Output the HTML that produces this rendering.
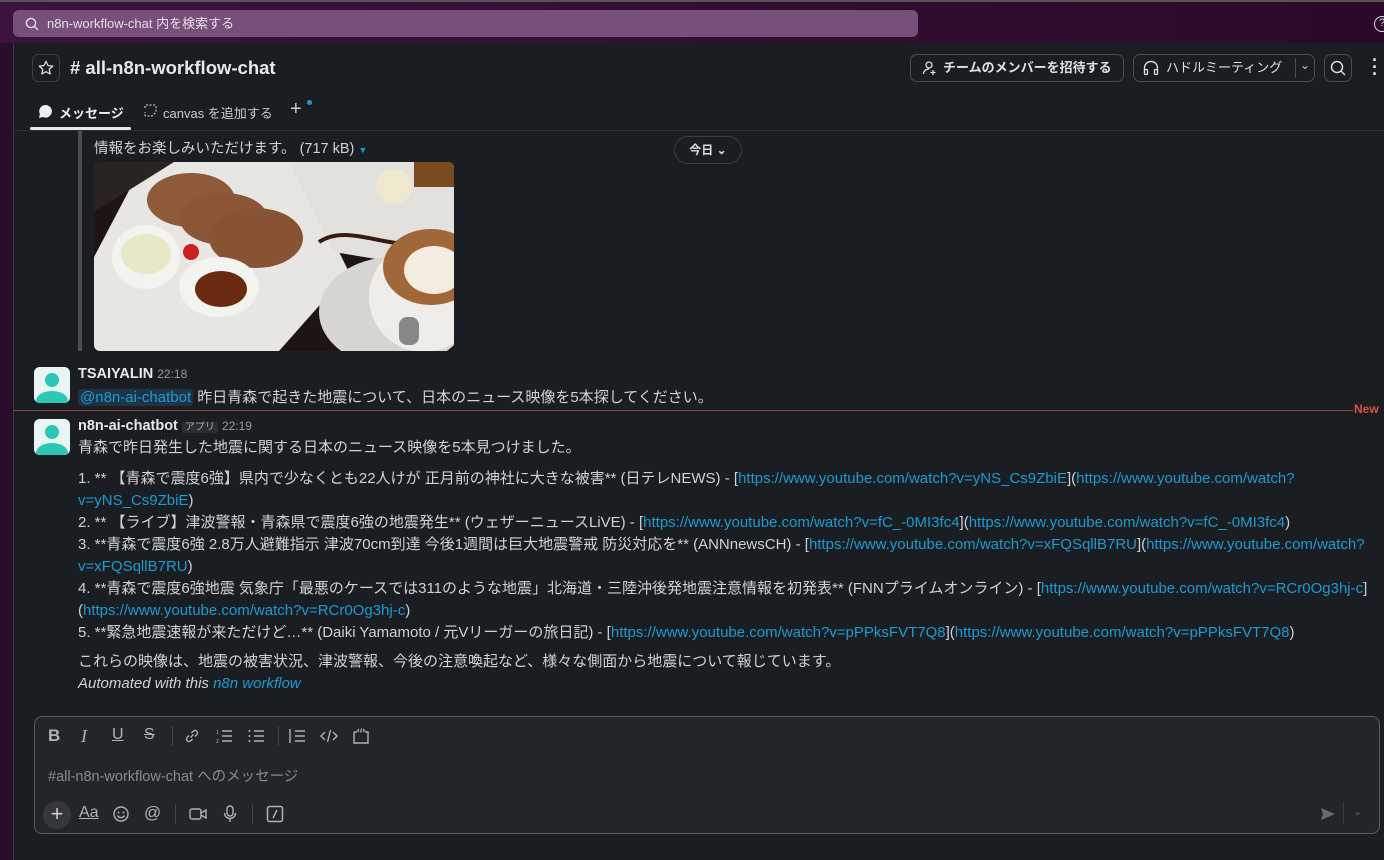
<!DOCTYPE html>
<html><head><meta charset="utf-8"><style>
*{box-sizing:border-box;margin:0;padding:0}
body{width:1384px;height:860px;overflow:hidden;background:#1a1d21;font-family:"Liberation Sans","Noto Sans CJK JP",sans-serif;color:#d1d2d3;position:relative}
.top{position:absolute;left:0;top:0;width:1384px;height:43px;background:linear-gradient(90deg,#3d133d,#2a0a28);border-top:2px solid #555}
.search{position:absolute;left:13px;top:8px;width:905px;height:27px;background:#765078;border-radius:6px;color:#e8dde8;font-size:13px;line-height:27px;padding-left:34px}
.left{position:absolute;left:0;top:43px;width:13px;height:817px;background:#2a0d2a}
.main{position:absolute;left:13px;top:43px;width:1371px;height:817px;background:#1a1d21;border-left:1px solid #3a3a3e}
.a{position:absolute;white-space:nowrap}
.btn{position:absolute;border:1px solid #4a4c50;border-radius:7px;height:28px;font-size:13px;font-weight:bold;color:#e0e0e0;line-height:26px}
.lnk{color:#1d9bd1}
.li{position:absolute;left:78px;font-size:15px;line-height:22px;white-space:nowrap}
.av{position:absolute;width:36px;height:36px;border-radius:6px;background:#dfe;overflow:hidden}
.ic{position:absolute;color:#b0b1b3;font-size:16px}
</style></head><body>
<div class="top"><div class="search">n8n-workflow-chat 内を検索する</div>
<svg style="position:absolute;left:25px;top:15px" width="14" height="14" viewBox="0 0 14 14"><circle cx="6" cy="6" r="4.6" fill="none" stroke="#e8dde8" stroke-width="1.4"/><path d="M9.5 9.5L13 13" stroke="#e8dde8" stroke-width="1.4"/></svg>
<div class="a" style="left:1374px;top:14px;width:16px;height:16px;border:1.5px solid #ddd;border-radius:50%;font-size:11px;color:#ddd;text-align:center;line-height:13px">?</div>
</div>
<div class="left"></div>
<div class="main"></div>
<!-- header -->
<div class="a" style="left:32px;top:54px;width:28px;height:28px;border:1px solid #3a3c40;border-radius:6px"></div>
<svg class="a" style="left:37px;top:59px" width="18" height="18" viewBox="0 0 24 24"><path d="M12 3l2.7 5.8 6.3.7-4.7 4.3 1.3 6.2L12 16.9 6.4 20l1.3-6.2L3 9.5l6.3-.7z" fill="none" stroke="#ddd" stroke-width="1.7" stroke-linejoin="round"/></svg>
<div class="a" style="left:70px;top:57px;font-size:18.5px;font-weight:bold;color:#e8e8e8"># all-n8n-workflow-chat</div>
<div class="btn" style="left:910px;top:54px;width:214px;padding-left:32px">チームのメンバーを招待する</div>
<svg class="a" style="left:922px;top:60px" width="16" height="16" viewBox="0 0 16 16"><circle cx="7" cy="5" r="3" fill="none" stroke="#ddd" stroke-width="1.3"/><path d="M1.5 14c0-3 2.5-5 5.5-5M11 10v5M8.5 12.5h5" stroke="#ddd" stroke-width="1.3" fill="none"/></svg>
<div class="btn" style="left:1133px;top:54px;width:182px;padding-left:32px;font-weight:normal">ハドルミーティング</div>
<div class="a" style="left:1295px;top:58px;width:1px;height:20px;background:#4a4c50"></div>
<div class="a" style="left:1300px;top:58px;font-size:12px;color:#ccc">⌄</div>
<svg class="a" style="left:1142px;top:59px" width="18" height="18" viewBox="0 0 18 18"><path d="M2.5 12V9a6.5 6.5 0 0 1 13 0v3" fill="none" stroke="#ddd" stroke-width="1.4"/><rect x="2.5" y="10.5" width="3" height="5" rx="1" fill="none" stroke="#ddd" stroke-width="1.3"/><rect x="12.5" y="10.5" width="3" height="5" rx="1" fill="none" stroke="#ddd" stroke-width="1.3"/></svg>
<div class="btn" style="left:1324px;top:54px;width:28px"></div>
<svg class="a" style="left:1329px;top:59px" width="18" height="18" viewBox="0 0 18 18"><circle cx="8" cy="8" r="5.5" fill="none" stroke="#ddd" stroke-width="1.5"/><path d="M12 12l4 4" stroke="#ddd" stroke-width="1.5"/></svg>
<div class="a" style="left:1372px;top:57px;font-size:18px;font-weight:bold;color:#ddd;line-height:7px">·<br>·<br>·</div>
<!-- tabs -->
<svg class="a" style="left:38px;top:104px" width="15" height="15" viewBox="0 0 15 15"><path d="M7.5 1a6.3 6.3 0 0 0-5.6 9.2L1 14l3.9-1a6.3 6.3 0 1 0 2.6-12z" fill="#eee"/></svg>
<div class="a" style="left:59px;top:103px;font-size:13px;font-weight:bold;color:#eee">メッセージ</div>
<div class="a" style="left:30px;top:127px;width:101px;height:3px;background:#e8e8e8;border-radius:2px"></div>
<svg class="a" style="left:143px;top:103px" width="15" height="15" viewBox="0 0 15 15"><path d="M2 5V3a1 1 0 0 1 1-1h9a1 1 0 0 1 1 1v6l-4 4H3a1 1 0 0 1-1-1V9" fill="none" stroke="#bbb" stroke-width="1.2" stroke-dasharray="2 1.5"/></svg>
<div class="a" style="left:163px;top:103px;font-size:13px;color:#ccc">canvas を追加する</div>
<div class="a" style="left:290px;top:98px;font-size:20px;color:#ccc">+</div>
<div class="a" style="left:307px;top:100px;width:5px;height:5px;border-radius:50%;background:#1d9bd1"></div>
<div class="a" style="left:13px;top:130px;width:1371px;height:1px;background:#2e3034"></div>
<!-- attachment -->
<div class="a" style="left:78px;top:131px;width:4px;height:220px;background:#4a4c50"></div>
<div class="a" style="left:94px;top:137px;font-size:14.5px;color:#d1d2d3">情報をお楽しみいただけます。 (717 kB) <span style="color:#1d9bd1;font-size:9px">▼</span></div>
<div class="a" style="left:674px;top:136px;width:68px;height:28px;border:1px solid #3a3c40;border-radius:14px;background:#1a1d21;font-size:12px;font-weight:bold;text-align:center;line-height:26px;color:#ddd">今日 ⌄</div>
<svg class="a" style="left:94px;top:162px;border-radius:6px" width="360" height="189" viewBox="0 0 360 189">
<rect width="360" height="189" fill="#1e1512"/>
<polygon points="0,95 0,189 185,189 255,110 200,0 50,0" fill="#e8e6e3"/>
<polygon points="0,0 80,0 0,50" fill="#2a2420"/>
<polygon points="195,0 360,0 360,110 240,90" fill="#e3e1de"/>
<ellipse cx="300" cy="150" rx="75" ry="55" fill="#d8d6d3"/>
<ellipse cx="97" cy="38" rx="44" ry="27" fill="#8e5a3a"/>
<ellipse cx="130" cy="57" rx="44" ry="26" fill="#8a5636"/>
<ellipse cx="162" cy="76" rx="47" ry="30" fill="#875332"/>
<ellipse cx="52" cy="95" rx="34" ry="32" fill="#f3f3f0"/>
<ellipse cx="52" cy="92" rx="25" ry="20" fill="#e8e8c8"/>
<ellipse cx="125" cy="125" rx="40" ry="30" fill="#f3f3f0"/>
<ellipse cx="127" cy="127" rx="26" ry="18" fill="#6a2a10"/>
<circle cx="97" cy="90" r="8" fill="#c82020"/>
<circle cx="300" cy="25" r="18" fill="#eee8cf"/>
<rect x="320" y="0" width="40" height="25" fill="#7a4a20"/>
<path d="M225 80c30-20 70 10 110 0" stroke="#3a1a10" stroke-width="4" fill="none"/>
<ellipse cx="330" cy="135" rx="55" ry="55" fill="#efedea"/>
<ellipse cx="337" cy="105" rx="48" ry="38" fill="#a06838"/>
<ellipse cx="340" cy="108" rx="30" ry="24" fill="#f5ece0"/>
<rect x="305" y="155" width="20" height="28" rx="8" fill="#888"/>
</svg>
<!-- message 1 -->
<div class="av" style="left:34px;top:367px"><svg width="36" height="36"><rect width="36" height="36" fill="#e8f5f3"/><circle cx="18" cy="13" r="7" fill="#2bc6b4"/><ellipse cx="18" cy="34" rx="16" ry="10" fill="#2bc6b4"/></svg></div>
<div class="a" style="left:78px;top:366px;font-size:14.5px;font-weight:bold;color:#e8e8e8">TSAIYALIN <span style="font-size:12px;font-weight:normal;color:#9a9b9d">22:18</span></div>
<div class="a" style="left:78px;top:386px;font-size:15px"><span style="color:#1d9bd1;background:#1f3346;padding:0 2px;border-radius:3px">@n8n-ai-chatbot</span> 昨日青森で起きた地震について、日本のニュース映像を5本探してください。</div>
<div class="a" style="left:13px;top:410px;width:1340px;height:1px;background:#8a4a3a"></div>
<div class="a" style="left:1354px;top:402px;font-size:12px;font-weight:bold;color:#d7553f">New</div>
<!-- message 2 -->
<div class="av" style="left:34px;top:419px"><svg width="36" height="36"><rect width="36" height="36" fill="#e8f5f3"/><circle cx="18" cy="13" r="7" fill="#2bc6b4"/><ellipse cx="18" cy="34" rx="16" ry="10" fill="#2bc6b4"/></svg></div>
<div class="a" style="left:78px;top:418px;font-size:14.5px;font-weight:bold;color:#e8e8e8">n8n-ai-chatbot <span style="font-size:10px;font-weight:normal;color:#aaa;background:#2c2e32;padding:0 3px;border-radius:2px">アプリ</span> <span style="font-size:12px;font-weight:normal;color:#9a9b9d">22:19</span></div>
<div class="li" style="top:437px">青森で昨日発生した地震に関する日本のニュース映像を5本見つけました。</div>
<div class="li" style="top:468px">1. ** 【青森で震度6強】県内で少なくとも22人けが 正月前の神社に大きな被害** (日テレNEWS) - [<span class="lnk">https://www.youtube.com/watch?v=yNS_Cs9ZbiE</span>](<span class="lnk">https://www.youtube.com/watch?</span></div>
<div class="li" style="top:490px"><span class="lnk">v=yNS_Cs9ZbiE</span>)</div>
<div class="li" style="top:512px">2. ** 【ライブ】津波警報・青森県で震度6強の地震発生** (ウェザーニュースLiVE) - [<span class="lnk">https://www.youtube.com/watch?v=fC_-0MI3fc4</span>](<span class="lnk">https://www.youtube.com/watch?v=fC_-0MI3fc4</span>)</div>
<div class="li" style="top:534px">3. **青森で震度6強 2.8万人避難指示 津波70cm到達 今後1週間は巨大地震警戒 防災対応を** (ANNnewsCH) - [<span class="lnk">https://www.youtube.com/watch?v=xFQSqllB7RU</span>](<span class="lnk">https://www.youtube.com/watch?</span></div>
<div class="li" style="top:556px"><span class="lnk">v=xFQSqllB7RU</span>)</div>
<div class="li" style="top:578px">4. **青森で震度6強地震 気象庁「最悪のケースでは311のような地震」北海道・三陸沖後発地震注意情報を初発表** (FNNプライムオンライン) - [<span class="lnk">https://www.youtube.com/watch?v=RCr0Og3hj-c</span>]</div>
<div class="li" style="top:600px">(<span class="lnk">https://www.youtube.com/watch?v=RCr0Og3hj-c</span>)</div>
<div class="li" style="top:622px">5. **緊急地震速報が来ただけど…** (Daiki Yamamoto / 元Vリーガーの旅日記) - [<span class="lnk">https://www.youtube.com/watch?v=pPPksFVT7Q8</span>](<span class="lnk">https://www.youtube.com/watch?v=pPPksFVT7Q8</span>)</div>
<div class="li" style="top:651px">これらの映像は、地震の被害状況、津波警報、今後の注意喚起など、様々な側面から地震について報じています。</div>
<div class="li" style="top:673px;font-style:italic">Automated with this <span class="lnk">n8n workflow</span></div>
<!-- composer -->
<div class="a" style="left:34px;top:716px;width:1346px;height:118px;border:1px solid #5a5c60;border-radius:8px;background:#222529"></div>
<div class="ic" style="left:48px;top:726px;font-weight:bold;font-size:17px">B</div>
<div class="ic" style="left:81px;top:726px;font-style:italic;font-family:'Liberation Serif',serif;font-size:18px">I</div>
<div class="ic" style="left:112px;top:726px;text-decoration:underline">U</div>
<div class="ic" style="left:144px;top:726px;text-decoration:line-through">S</div>
<div class="a" style="left:172px;top:726px;width:1px;height:20px;background:#444"></div>
<svg class="a" style="left:183px;top:727px" width="18" height="18" viewBox="0 0 18 18"><path d="M7.5 10.5l3-3M6 8.5L4 10.5a2.5 2.5 0 0 0 3.5 3.5l2-2M12 9.5l2-2A2.5 2.5 0 0 0 10.5 4l-2 2" stroke="#b0b1b3" stroke-width="1.4" fill="none"/></svg>
<svg class="a" style="left:215px;top:727px" width="18" height="18" viewBox="0 0 18 18"><path d="M7 4h10M7 9h10M7 14h10" stroke="#b0b1b3" stroke-width="1.4"/><text x="1" y="7" font-size="5" fill="#b0b1b3">1</text><text x="1" y="16" font-size="5" fill="#b0b1b3">2</text></svg>
<svg class="a" style="left:247px;top:727px" width="18" height="18" viewBox="0 0 18 18"><path d="M7 4h10M7 9h10M7 14h10" stroke="#b0b1b3" stroke-width="1.4"/><circle cx="2.5" cy="4" r="1" fill="#b0b1b3"/><circle cx="2.5" cy="9" r="1" fill="#b0b1b3"/><circle cx="2.5" cy="14" r="1" fill="#b0b1b3"/></svg>
<div class="a" style="left:278px;top:726px;width:1px;height:20px;background:#444"></div>
<svg class="a" style="left:288px;top:727px" width="18" height="18" viewBox="0 0 18 18"><path d="M2 2v14M7 4h10M7 9h10M7 14h10" stroke="#b0b1b3" stroke-width="1.4"/></svg>
<svg class="a" style="left:320px;top:727px" width="18" height="18" viewBox="0 0 18 18"><path d="M5 5l-4 4 4 4M13 5l4 4-4 4M10.5 3l-3 12" stroke="#b0b1b3" stroke-width="1.4" fill="none"/></svg>
<svg class="a" style="left:352px;top:727px" width="18" height="18" viewBox="0 0 18 18"><path d="M2 5v11h14V5h-3M5 5H2" stroke="#b0b1b3" stroke-width="1.4" fill="none"/><path d="M7 2L5.5 3.5 7 5M11 2l1.5 1.5L11 5M9.5 1.5l-1 4" stroke="#b0b1b3" stroke-width="1.2" fill="none"/></svg>
<div class="a" style="left:48px;top:765px;font-size:14.5px;color:#8a8b8d">#all-n8n-workflow-chat へのメッセージ</div>
<div class="a" style="left:43px;top:801px;width:28px;height:28px;border-radius:50%;background:#35373b;color:#ccc;font-size:22px;text-align:center;line-height:26px">+</div>
<div class="ic" style="left:79px;top:804px;font-size:16px;text-decoration:underline">Aa</div>
<svg class="a" style="left:112px;top:805px" width="18" height="18" viewBox="0 0 18 18"><circle cx="9" cy="9" r="7" fill="none" stroke="#b0b1b3" stroke-width="1.4"/><circle cx="6.5" cy="7.5" r="1" fill="#b0b1b3"/><circle cx="11.5" cy="7.5" r="1" fill="#b0b1b3"/><path d="M5.5 10.5a4 4 0 0 0 7 0" stroke="#b0b1b3" stroke-width="1.4" fill="none"/></svg>
<div class="ic" style="left:144px;top:803px;font-size:17px">@</div>
<div class="a" style="left:175px;top:804px;width:1px;height:20px;background:#444"></div>
<svg class="a" style="left:189px;top:806px" width="18" height="16" viewBox="0 0 18 16"><rect x="1" y="3" width="11" height="10" rx="2" fill="none" stroke="#b0b1b3" stroke-width="1.4"/><path d="M12 7l5-3v8l-5-3" fill="none" stroke="#b0b1b3" stroke-width="1.4"/></svg>
<svg class="a" style="left:222px;top:805px" width="16" height="18" viewBox="0 0 16 18"><rect x="5" y="1" width="6" height="10" rx="3" fill="none" stroke="#b0b1b3" stroke-width="1.4"/><path d="M2.5 8a5.5 5.5 0 0 0 11 0M8 13.5V17" stroke="#b0b1b3" stroke-width="1.4" fill="none"/></svg>
<div class="a" style="left:252px;top:804px;width:1px;height:20px;background:#444"></div>
<svg class="a" style="left:266px;top:805px" width="18" height="18" viewBox="0 0 18 18"><rect x="1.5" y="1.5" width="15" height="15" rx="2" fill="none" stroke="#b0b1b3" stroke-width="1.5"/><path d="M11 5l-4 8" stroke="#b0b1b3" stroke-width="1.5"/></svg>
<svg class="a" style="left:1320px;top:806px" width="16" height="16" viewBox="0 0 16 16"><path d="M1 2l14 6-14 6 2-6z" fill="#6a6b6d"/></svg>
<div class="a" style="left:1343px;top:802px;width:1px;height:22px;background:#3a3c40"></div>
<div class="a" style="left:1353px;top:805px;font-size:11px;color:#6a6b6d">⌄</div>
</body></html>
